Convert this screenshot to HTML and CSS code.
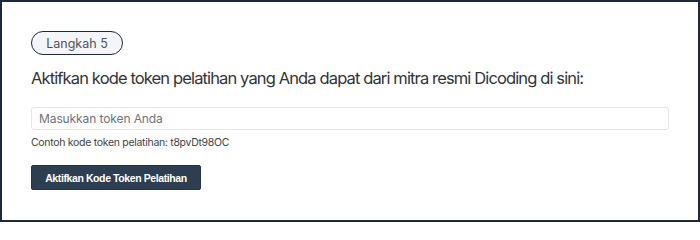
FILE: index.html
```html
<!DOCTYPE html>
<html lang="id">
<head>
<meta charset="utf-8">
<title>Aktifkan Kode Token</title>
<link rel="stylesheet" href="styles.css">
</head>
<body>
<main class="frame">
  <section class="card">
    <span class="step">Langkah 5</span>
    <h2 class="title">Aktifkan kode token pelatihan yang Anda dapat dari mitra resmi Dicoding di sini:</h2>
    <input class="token-input" type="text" placeholder="Masukkan token Anda">
    <p class="hint">Contoh kode token pelatihan: t8pvDt98OC</p>
    <button class="btn" type="button">Aktifkan Kode Token Pelatihan</button>
  </section>
</main>
</body>
</html>
```
FILE: styles.css
```css
* { box-sizing: border-box; }
html, body { margin: 0; padding: 0; background: #ffffff; }
body {
  font-family: Inter, "Noto Sans", sans-serif;
  color: #3f3f46;
}
.frame {
  width: 700px;
  height: 222px;
  border: 2px solid #1e293b;
  padding: 29px 29px 0 29px;
}
.card {
  display: flex;
  flex-direction: column;
  align-items: flex-start;
}
.step {
  display: inline-flex;
  align-items: center;
  justify-content: center;
  height: 24px;
  width: 92px;
  border: 1.5px solid #1e293b;
  border-radius: 12px;
  background: #f3f5f8;
  font-size: 12.5px;
  color: #52525b;
}
.title {
  margin: 12px 0 0 0;
  font-size: 16.5px;
  font-weight: 400;
  letter-spacing: -0.87px;
  color: #333338;
  line-height: 22px;
  white-space: nowrap;
}
.token-input {
  margin-top: 18px;
  width: 638px;
  height: 23px;
  border: 1px solid #e4e4e7;
  border-radius: 3px;
  padding: 0 7px;
  font-family: Inter, "Noto Sans", sans-serif;
  font-size: 12px;
  letter-spacing: -0.1px;
  color: #3f3f46;
  outline: none;
}
.token-input::placeholder { color: #71717a; }
.hint {
  margin: 6px 0 0 0;
  font-size: 10.5px;
  letter-spacing: -0.3px;
  line-height: 14px;
  color: #3f3f46;
}
.btn {
  margin-top: 15px;
  width: 170px;
  height: 25px;
  background: #2c3e50;
  border: 1px solid #243444;
  border-radius: 2px;
  color: #ffffff;
  font-family: "Liberation Sans", Arial, sans-serif;
  font-weight: 700;
  font-size: 10.5px;
  letter-spacing: -0.4px;
  padding: 0;
}
```
